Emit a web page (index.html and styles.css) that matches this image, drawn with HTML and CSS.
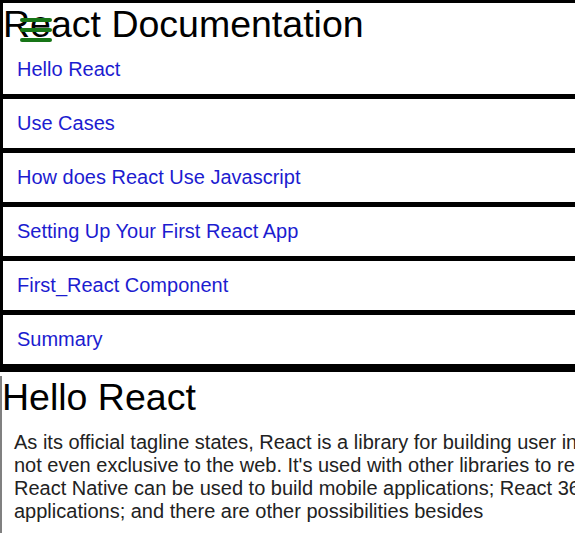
FILE: index.html
```html
<!DOCTYPE html>
<html lang="en">
<head>
    <meta charset="UTF-8">
    <meta name="viewport" content="width=device-width, initial-scale=1.0">
    <title>React Documentation</title>
    <link rel="stylesheet" href="styles.css">
</head>
<body>
    <nav id="navbar">
        <header class="nav-title">
            <svg class="menu-icon" width="32" height="26" viewBox="0 0 32 26">
                <line x1="2" y1="3" x2="30" y2="3"/>
                <line x1="2" y1="13" x2="30" y2="13"/>
                <line x1="2" y1="23" x2="30" y2="23"/>
            </svg>
            React Documentation
        </header>
        <ul class="nav-list">
            <li><a class="nav-link" href="#Hello_React">Hello React</a></li>
            <li><a class="nav-link" href="#Use_Cases">Use Cases</a></li>
            <li><a class="nav-link" href="#How_does_React_Use_Javascript">How does React Use Javascript</a></li>
            <li><a class="nav-link" href="#Setting_Up_Your_First_React_App">Setting Up Your First React App</a></li>
            <li><a class="nav-link" href="#First_React_Component">First_React Component</a></li>
            <li><a class="nav-link" href="#Summary">Summary</a></li>
        </ul>
    </nav>
    <main id="main-doc">
        <section class="main-section" id="Hello_React">
            <header class="section-title">Hello React</header>
            <p>As its official tagline states, React is a library for building user interfaces. React is not a framework – it's<br>
            not even exclusive to the web. It's used with other libraries to render to certain environments. For instance,<br>
            React Native can be used to build mobile applications; React 360 can be used to build virtual reality<br>
            applications; and there are other possibilities besides</p>
        </section>
    </main>
</body>
</html>
```

FILE: styles.css
```css
body {
    margin: 0;
    padding: 0;
    font-family: "Liberation Sans", Arial, sans-serif;
    overflow-x: hidden;
}

#navbar {
    border-top: 3px solid black;
    border-left: 3px solid black;
    border-bottom: 3px solid black;
}

.nav-title {
    position: relative;
    font-size: 37.5px;
    line-height: 42px;
}

.menu-icon {
    position: absolute;
    left: 17px;
    top: 14px;
}

.menu-icon line {
    stroke: #177517;
    stroke-width: 4;
    stroke-linecap: round;
}

.nav-list {
    list-style: none;
    margin: 0;
    padding: 0;
}

.nav-list li {
    padding: 13px 14px;
    font-size: 20px;
    line-height: 23px;
    border-bottom: 5px solid black;
}

.nav-link {
    color: #1c1cd0;
    text-decoration: none;
}

#main-doc {
    border-left: 2px solid #808080;
}

.section-title {
    font-size: 37.5px;
    line-height: 43px;
    margin-top: 4px;
}

.main-section p {
    width: 1100px;
    margin: 12px 0 0 12px;
    padding-bottom: 20px;
    font-size: 20px;
    line-height: 23px;
    color: #222;
}
```
